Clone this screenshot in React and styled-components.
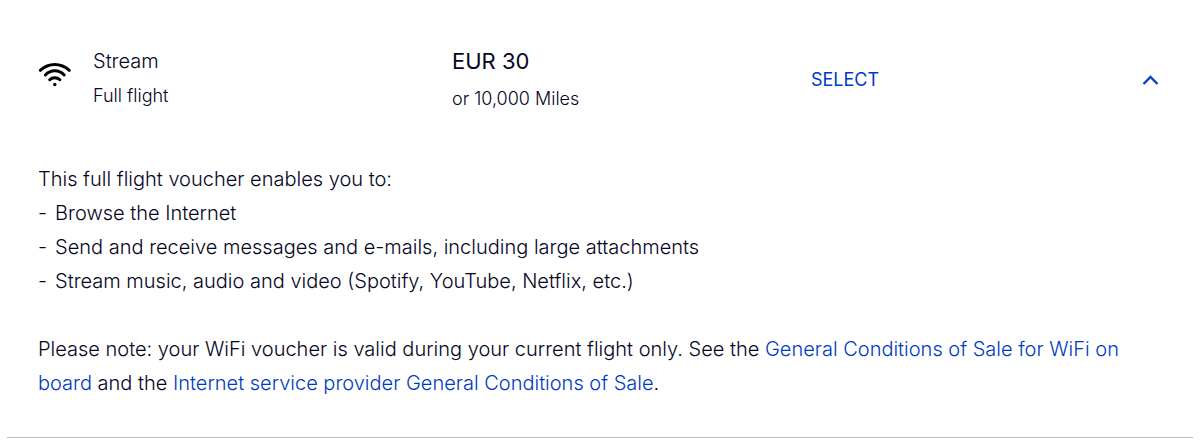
import React, { useState } from "react";
import styled, { createGlobalStyle } from "styled-components";

const GlobalStyle = createGlobalStyle`
  *, *::before, *::after { box-sizing: border-box; }
  body {
    margin: 0;
    background: #fff;
    color: #05051e;
    font-family: Inter, "Noto Sans", sans-serif;
    font-weight: 300;
  }
`;

const Voucher = styled.article`
  margin: 0 7px;
  padding: 44px 31px 37px;
  border-bottom: 1px solid #bdbdbd;
`;

const Summary = styled.header`
  display: grid;
  grid-template-columns: 55px repeat(3, 1fr);
  margin-right: -8px;
`;

const WifiIcon = styled.svg`
  width: 34px;
  height: 26px;
  margin-top: 18px;
`;

const Name = styled.h2`
  margin: 0;
  font-size: 20px;
  font-weight: 300;
  line-height: 34px;
`;

const Price = styled.p`
  margin: 0;
  font-size: 22px;
  font-weight: 400;
  line-height: 34px;
`;

const Detail = styled.p`
  margin: 0;
  font-size: 18px;
  line-height: ${(p) => (p.$loose ? "42px" : "36px")};
`;

const Actions = styled.div`
  display: flex;
  justify-content: space-between;
  align-items: center;
  height: 70px;
  padding-right: 10px;
`;

const TextButton = styled.button`
  padding: 0;
  border: 0;
  background: none;
  color: #003ac2;
  font: inherit;
  font-size: 18px;
  font-weight: 400;
  cursor: pointer;
`;

const ToggleButton = styled(TextButton)`
  display: flex;
  padding-top: 2px;
  svg { width: 18px; height: 12px; }
`;

const Description = styled.section`
  padding-top: 42px;
  font-size: 20px;
  line-height: 34px;

  p, ul { margin: 0; }
`;

const Benefits = styled.ul`
  padding: 0;
  list-style: none;

  li { display: flex; gap: 8px; }
  li::before { content: "-"; }
`;

const Note = styled.p`
  && { margin-top: 34px; }
  a { color: #003ac2; text-decoration: none; }
`;

export default function App() {
  const [open, setOpen] = useState(true);
  return (
    <>
      <GlobalStyle />
      <Voucher>
        <Summary>
          <WifiIcon
            viewBox="0 0 34 26"
            fill="none"
            stroke="#000"
            strokeWidth="3"
            strokeLinecap="round"
            aria-hidden="true"
          >
            <path d="M2.300 8.300C10.800 .4 22.800 .4 31.300 8.300" />
            <path d="M7.400 13C12.800 7.400 20.800 7.400 26.200 13" />
            <path d="M11.700 17.700C14.300 15 19.300 15 21.900 17.700" />
            <circle cx="16.800" cy="22.500" r="1.700" fill="#000" stroke="none" />
          </WifiIcon>
          <div>
            <Name>Stream</Name>
            <Detail>Full flight</Detail>
          </div>
          <div>
            <Price>EUR 30</Price>
            <Detail $loose>or 10,000 Miles</Detail>
          </div>
          <Actions>
            <TextButton type="button">SELECT</TextButton>
            <ToggleButton
              type="button"
              aria-label="Voucher details"
              aria-expanded={open}
              onClick={() => setOpen(!open)}
            >
              <svg viewBox="0 0 18 12" fill="none" stroke="#0a43c4" strokeWidth="2.400">
                <path d={open ? "M1.500 10L8.500 3L15.500 10" : "M1.500 3L8.500 10L15.500 3"} />
              </svg>
            </ToggleButton>
          </Actions>
        </Summary>
        {open && (
          <Description>
            <p>This full flight voucher enables you to:</p>
            <Benefits>
              <li>Browse the Internet</li>
              <li>Send and receive messages and e-mails, including large attachments</li>
              <li>Stream music, audio and video (Spotify, YouTube, Netflix, etc.)</li>
            </Benefits>
            <Note>
              Please note: your WiFi voucher is valid during your current flight only. See the{" "}
              <a href="#wifi-conditions">General Conditions of Sale for WiFi on board</a> and the{" "}
              <a href="#provider-conditions">Internet service provider General Conditions of Sale</a>.
            </Note>
          </Description>
        )}
      </Voucher>
    </>
  );
}
